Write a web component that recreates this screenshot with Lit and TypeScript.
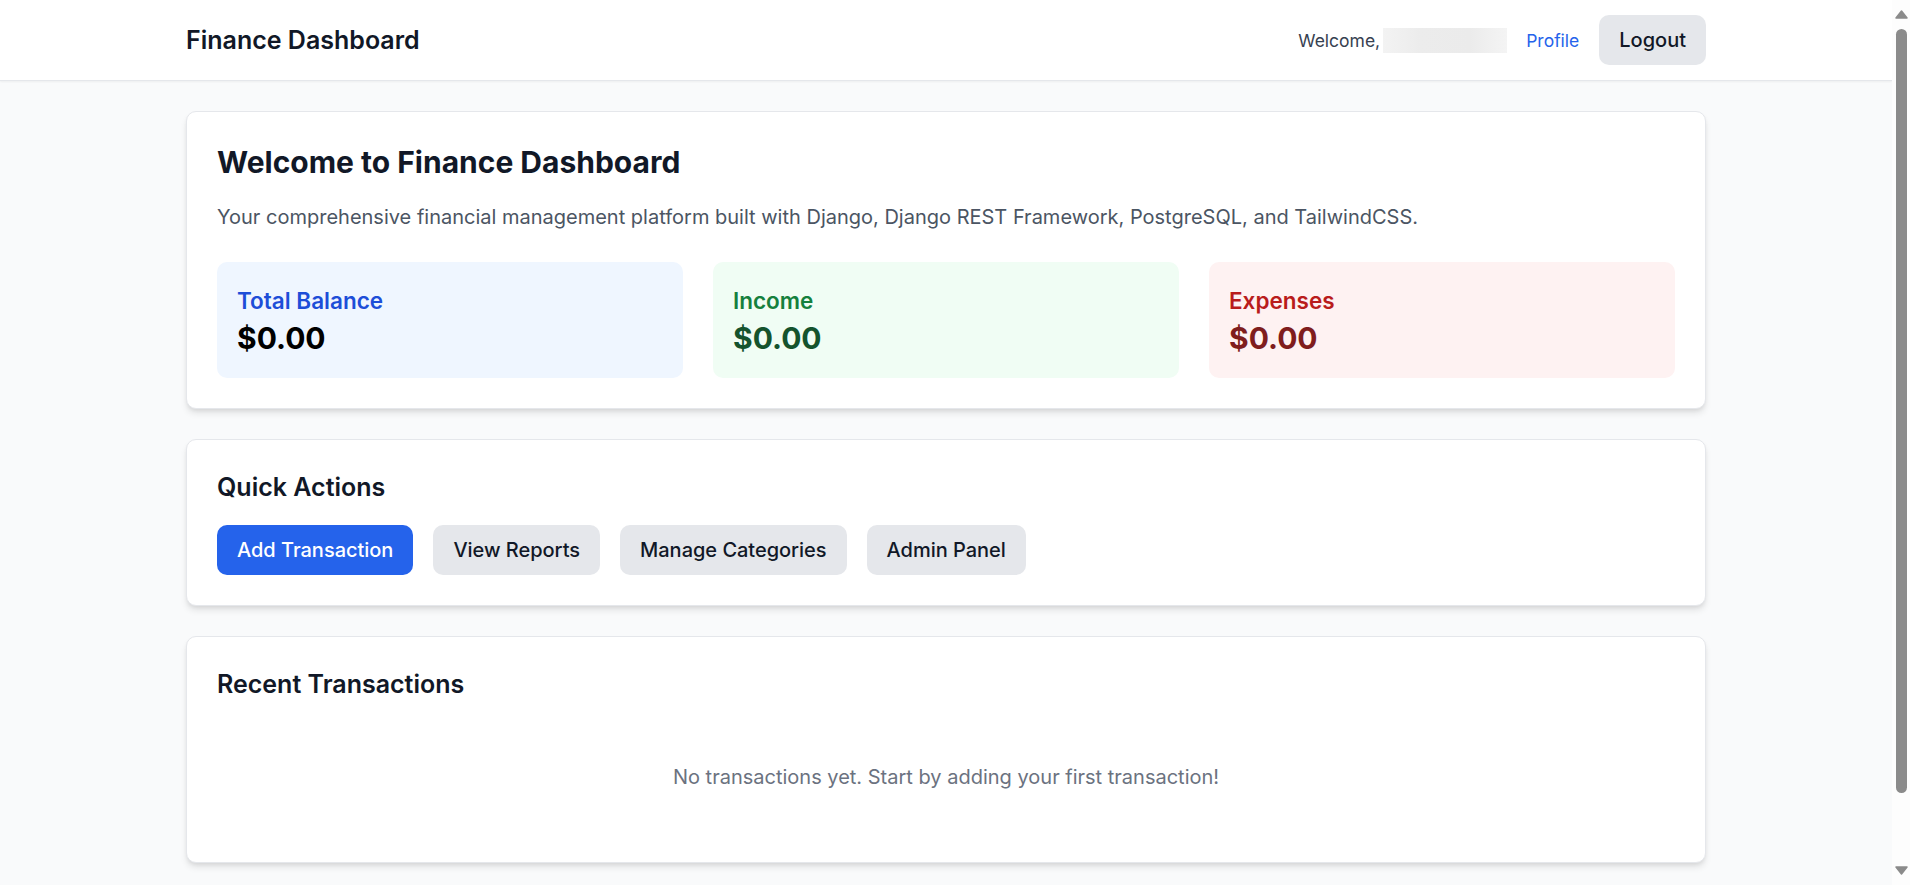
import { html, css, LitElement } from "lit";
import { customElement } from "lit/decorators.js";

const stats = [
  { key: "blue", label: "Total Balance", value: "$0.00" },
  { key: "green", label: "Income", value: "$0.00" },
  { key: "red", label: "Expenses", value: "$0.00" },
];

const actions = [
  { label: "Add Transaction", primary: true },
  { label: "View Reports", primary: false },
  { label: "Manage Categories", primary: false },
  { label: "Admin Panel", primary: false },
];

@customElement("app-root")
export class AppRoot extends LitElement {
  static override styles = css`
    :host {
      display: flex;
      height: 885px;
      overflow: hidden;
      background: #f9fafb;
      color: #111827;
      font-family: Inter, "Liberation Sans", sans-serif;
      font-size: 20px;
      line-height: 30px;
    }

    .page {
      flex: 1;
      min-width: 0;
    }

    .topbar {
      background: #fff;
      border-bottom: 1px solid #e5e7eb;
      box-shadow: 0 1px 2px rgb(0 0 0 / 0.05);
    }
    .topbar__inner,
    .content {
      max-width: 1520px;
      margin: 0 auto;
    }
    .topbar__inner {
      display: flex;
      align-items: center;
      justify-content: space-between;
      height: 80px;
    }
    .brand {
      font-size: 25px;
      line-height: 35px;
      font-weight: 600;
    }
    .user {
      display: flex;
      align-items: center;
      gap: 20px;
      font-size: 17.5px;
      line-height: 25px;
    }
    .user__welcome {
      display: flex;
      align-items: center;
      gap: 3px;
      margin-right: -1px;
      color: #374151;
    }
    .user__name {
      width: 124px;
      height: 25px;
      background: linear-gradient(90deg, #f3f3f3, #ececec 30%, #ebebeb 70%, #f4f4f4);
    }
    .user__profile {
      color: #2563eb;
      text-decoration: none;
    }

    .btn {
      display: block;
      padding: 10px 20px;
      border-radius: 10px;
      background: #e5e7eb;
      color: #111827;
      font-size: 20px;
      line-height: 30px;
      font-weight: 500;
      text-decoration: none;
    }
    .btn--primary {
      background: #2563eb;
      color: #fff;
    }

    .content {
      display: flex;
      flex-direction: column;
      gap: 30px;
      padding-top: 30px;
    }

    .card {
      padding: 30px;
      border: 1px solid #e5e7eb;
      border-radius: 10px;
      background: #fff;
      box-shadow: 0 5px 7.5px -1.25px rgb(0 0 0 / 0.1), 0 2.5px 5px -2.5px rgb(0 0 0 / 0.1);
    }
    .card h1 {
      margin: 0 0 20px;
      font-size: 30px;
      line-height: 40px;
      font-weight: 700;
    }
    .card h2 {
      margin: 0 0 20px;
      font-size: 25px;
      line-height: 35px;
      font-weight: 600;
    }
    .intro {
      margin: 0 0 30px;
      color: #4b5563;
    }

    .stats {
      display: grid;
      grid-template-columns: repeat(3, 1fr);
      gap: 30px;
    }
    .stat {
      padding: 21px 20px 20px;
      border-radius: 10px;
    }
    .stat__label {
      font-size: 22.5px;
      line-height: 35px;
      font-weight: 600;
    }
    .stat__value {
      font-size: 30px;
      line-height: 40px;
      font-weight: 700;
    }
    .stat--blue {
      background: #eff6ff;
    }
    .stat--blue .stat__label {
      color: #1d4ed8;
    }
    .stat--blue .stat__value {
      color: #000;
    }
    .stat--green {
      background: #f0fdf4;
    }
    .stat--green .stat__label {
      color: #15803d;
    }
    .stat--green .stat__value {
      color: #14532d;
    }
    .stat--red {
      background: #fef2f2;
    }
    .stat--red .stat__label {
      color: #b91c1c;
    }
    .stat--red .stat__value {
      color: #7f1d1d;
    }

    .actions {
      display: flex;
      gap: 20px;
    }
    .actions .btn {
      letter-spacing: -0.02px;
    }

    .empty {
      padding: 40px 0;
      color: #6b7280;
      text-align: center;
    }

    .scrollbar {
      display: flex;
      flex-direction: column;
      align-items: center;
      width: 18px;
      background: #fdfdfd;
    }
    .scrollbar svg {
      display: block;
      width: 13px;
      height: 9px;
      fill: #8b8b8b;
      stroke: #8b8b8b;
      stroke-width: 1.5;
      stroke-linejoin: round;
    }
    .scrollbar__up {
      margin-top: 10px;
    }
    .scrollbar__thumb {
      width: 11px;
      height: 764px;
      margin: 10px 0 73px;
      border-radius: 6px;
      background: #8b8b8b;
    }
  `;

  override render() {
    return html`
      <div class="page">
        <header class="topbar">
          <div class="topbar__inner">
            <div class="brand">Finance Dashboard</div>
            <div class="user">
              <span class="user__welcome">Welcome,<span class="user__name"></span></span>
              <a class="user__profile" href="#">Profile</a>
              <a class="btn" href="#">Logout</a>
            </div>
          </div>
        </header>

        <main class="content">
          <section class="card">
            <h1>Welcome to Finance Dashboard</h1>
            <p class="intro">
              Your comprehensive financial management platform built with Django, Django REST Framework,
              PostgreSQL, and TailwindCSS.
            </p>
            <div class="stats">
              ${stats.map(
                (s) => html`
                  <div class="stat stat--${s.key}">
                    <div class="stat__label">${s.label}</div>
                    <div class="stat__value">${s.value}</div>
                  </div>
                `
              )}
            </div>
          </section>

          <section class="card">
            <h2>Quick Actions</h2>
            <div class="actions">
              ${actions.map(
                (a) => html`<a class="btn ${a.primary ? "btn--primary" : ""}" href="#">${a.label}</a>`
              )}
            </div>
          </section>

          <section class="card">
            <h2>Recent Transactions</h2>
            <div class="empty">No transactions yet. Start by adding your first transaction!</div>
          </section>
        </main>
      </div>

      <div class="scrollbar">
        <svg class="scrollbar__up" viewBox="0 0 13 9"><polygon points="6.5,1 12,8 1,8" /></svg>
        <div class="scrollbar__thumb"></div>
        <svg viewBox="0 0 13 9"><polygon points="1,1 12,1 6.5,8" /></svg>
      </div>
    `;
  }
}

declare global {
  interface HTMLElementTagNameMap {
    "app-root": AppRoot;
  }
}
